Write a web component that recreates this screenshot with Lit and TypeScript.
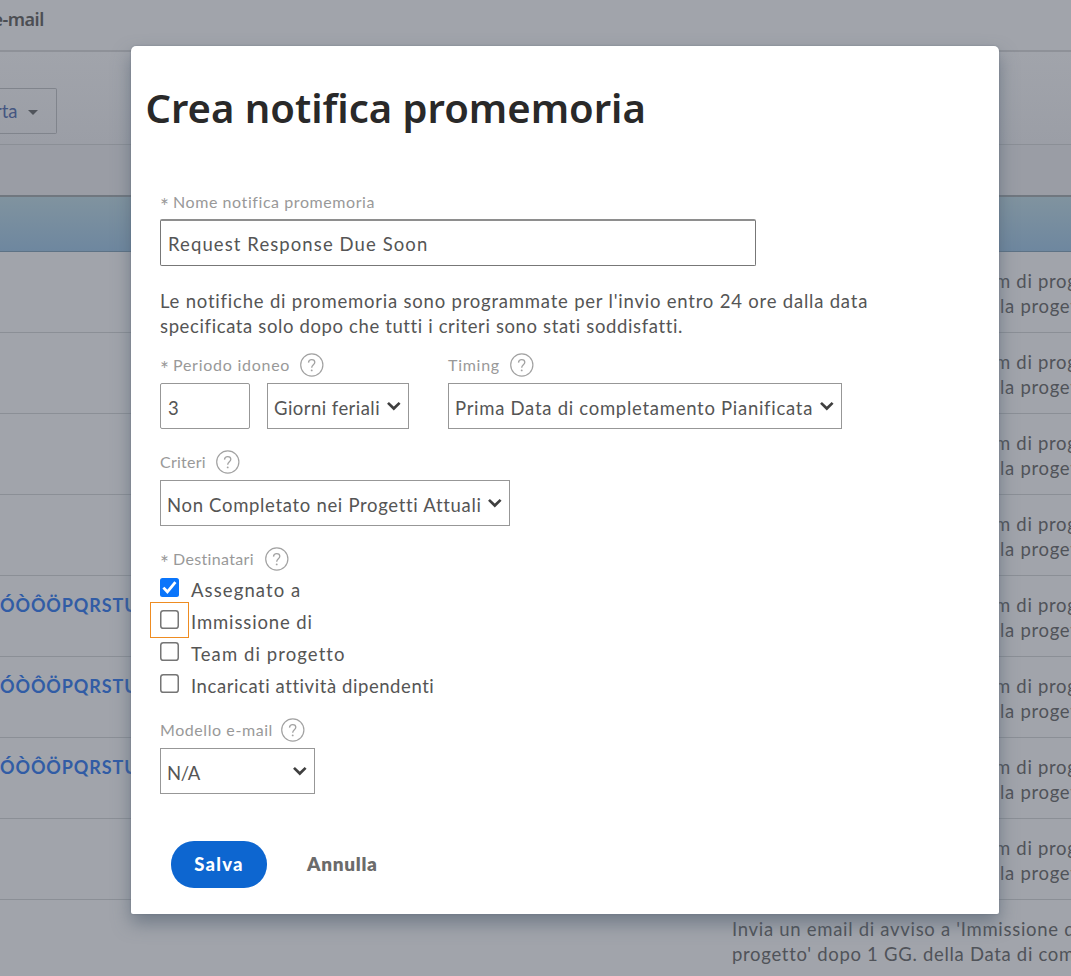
import { LitElement, html, css, svg, nothing } from "lit";
import { customElement, property } from "lit/decorators.js";

@customElement("help-icon")
export class HelpIcon extends LitElement {
  static styles = css`
    :host { display: block; width: 24px; height: 24px; flex: none; }
    svg { display: block; }
  `;
  render() {
    return html`<svg width="24" height="24" viewBox="0 0 24 24" fill="none" stroke="#a2a2a2">
      <circle cx="11.8" cy="12" r="11.1" stroke-width="1.2" />
      <path d="M8.5 9.6c.1-1.9 1.4-3 3.2-3s3.1 1.1 3.1 2.7c0 2.4-3.1 2.5-3.1 5.4" stroke-width="1.3" />
      <circle cx="11.7" cy="17.4" r=".95" fill="#a2a2a2" stroke="none" />
    </svg>`;
  }
}

@customElement("select-box")
export class SelectBox extends LitElement {
  @property() value = "";
  static styles = css`
    :host { display: flex; align-items: center; justify-content: space-between; box-sizing: border-box;
      height: 46px; border: 1px solid #979797; padding: 4px 6px 0 6px; background: #fff; white-space: nowrap; }
    svg { display: block; flex: none; margin-top: -5px; }
  `;
  render() {
    return html`<span>${this.value}</span>
      <svg width="16" height="12" viewBox="0 0 16 12" fill="none" stroke="#3f3f3f" stroke-width="2.7">
        <path d="M2 2.9 7.8 8.5l5.8-5.6" />
      </svg>`;
  }
}

@customElement("check-box")
export class CheckBox extends LitElement {
  @property({ type: Boolean }) checked = false;
  static styles = css`
    :host { display: block; width: 19px; height: 19px; flex: none; }
    svg { display: block; }
  `;
  render() {
    return html`<svg width="19" height="19" viewBox="0 0 19 19" fill="none">
      ${this.checked
        ? svg`<rect width="19" height="19" rx="2.5" fill="#0a75fb"/><path d="m3.4 9.6 4 4.2L15.4 4.2" stroke="#fff" stroke-width="2.8"/>`
        : svg`<rect x=".75" y=".75" width="17.5" height="17.5" rx="2.6" stroke="#757575" stroke-width="1.5" fill="#fff"/>`}
    </svg>`;
  }
}

@customElement("app-root")
export class AppRoot extends LitElement {
  static styles = css`
    :host { display: block; position: relative; width: 1071px; height: 976px; overflow: hidden;
      background: #a1a4ab; color: #555; font: 18.5px/24.5px Lato, "Open Sans", sans-serif; white-space: nowrap; }
    * { box-sizing: border-box; }
    .page { display: flex; flex-direction: column; height: 976px; }
    .crumb { height: 52px; flex: none; border-bottom: 2px solid #8e9198; padding-top: 7px;
      font: 600 18px/24px "Noto Sans", sans-serif; letter-spacing: -.5px; color: #4c4e53; overflow: hidden; }
    .crumb span { display: block; margin-left: -7.5px; }
    .tools { height: 93px; flex: none; border-bottom: 1px solid #8b8f96; padding-top: 36px;
      background: linear-gradient(#a1a4ab, #9b9ea6); }
    .more { display: flex; align-items: center; width: 57px; height: 46px; border: 1px solid #80848c; border-left: 0;
      border-radius: 0 2px 2px 0; color: #455681; gap: 10px; }
    .more span { margin-left: -5px; }
    .caret { border: 5px solid transparent; border-top-color: #50545b; border-bottom: 0; margin-top: 2px; }
    .filter { height: 50px; flex: none; background: #9a9da5; }
    .head { height: 57px; flex: none; border-top: 2px solid #70777f; border-bottom: 1px solid #5d7285;
      background: linear-gradient(#80939f, #6e879f); }
    .row { height: 81px; flex: none; display: flex; justify-content: space-between; border-bottom: 1px solid #8b8f96;
      padding-top: 17px; color: #505359; letter-spacing: .7px; }
    .row.last { border: 0; }
    .name { color: #315ca5; font-weight: 700; font-size: 18px; letter-spacing: .9px; line-height: 24px; width: 131px; overflow: hidden; }
    .desc { width: 76px; overflow: hidden; }
    .desc .a { margin-left: 0; }
    .desc .b { margin-left: 5px; }
    .desc.wide { width: 339px; }
    .dialog { position: absolute; left: 131px; top: 46px; width: 868px; height: 868px; background: #fff;
      border-radius: 5px 5px 2px 2px; box-shadow: 0 9px 18px rgba(80, 95, 112, .6), 0 0 2px rgba(70, 85, 105, .4);
      padding: 37px 0 0 29px; display: flex; flex-direction: column; align-items: flex-start; }
    h1 { margin: 0 0 0 -14.5px; font: 600 40px/50px "Noto Sans", sans-serif; color: #292929; }
    .label { display: flex; align-items: center; height: 24px; font-size: 16px; color: #999; }
    .label help-icon { margin-left: 10px; }
    .star { width: 13px; font-size: 21px; line-height: 24px; padding-top: 8px; letter-spacing: 0; }
    .first { margin-top: 57px; }
    .text { border: 1px solid #777; border-top: 2px solid #8e8e8e; border-radius: 2px; height: 47px; width: 596px;
      padding: 2px 7px 0; display: flex; align-items: center; margin-top: 5px; }
    .text.num { width: 90px; height: 46px; border: 1px solid #979797; padding-top: 4px; margin: 0 17px 0 0; }
    .note { margin-top: 23px; }
    .pair { display: flex; margin-top: 15px; }
    .period { width: 288px; }
    .line { display: flex; margin-top: 6px; }
    .g3 { width: 142px; letter-spacing: .45px; }
    .g4 { width: 394px; margin-top: 6px; letter-spacing: .72px; }
    .crit { margin-top: 21px; }
    .g5 { width: 350px; margin-top: 6px; letter-spacing: .68px; }
    .dest { margin-top: 21px; }
    .label.dest help-icon { margin-left: 11px; }
    .checks { margin-top: 7px; }
    .check { display: flex; gap: 12px; height: 32px; position: relative; }
    .check span { line-height: 25px; }
    .mark { position: absolute; left: -10px; top: -8px; width: 39px; height: 36px; border: 1px solid #ee8c22; }
    .model { margin-top: 12px; }
    .label.model help-icon { margin-left: 8px; }
    .g6 { width: 155px; margin-top: 6px; letter-spacing: -.3px; }
    .actions { display: flex; align-items: center; margin: 47px 0 0 11px; gap: 40px; }
    .save { background: #0d66d0; color: #fff; border-radius: 23px; width: 96px; height: 47px; line-height: 47px;
      text-align: center; font-weight: 900; letter-spacing: 1.2px; }
    .cancel { color: #6b6b6b; font-weight: 800; font-size: 19px; letter-spacing: .7px; }
    .s25 { letter-spacing: .25px; }
    .s35 { letter-spacing: .35px; }
    .s56 { letter-spacing: .57px; }
    .s62 { letter-spacing: .62px; }
    .s72 { letter-spacing: .74px; }
    .s79 { letter-spacing: .79px; }
    .s87 { letter-spacing: .87px; }
    .s108 { letter-spacing: 1.09px; }
  `;

  render() {
    const rows = [0, 1, 2, 3, 4, 5, 6, 7];
    return html`
      <div class="page">
        <div class="crumb"><span>e-mail</span></div>
        <div class="tools"><div class="more"><span>rta</span><i class="caret"></i></div></div>
        <div class="filter"></div>
        <div class="head"></div>
        ${rows.map((i) => html`<div class="row">
          <div class="name">${i >= 4 && i <= 6 ? "ÓÒÔÖPQRSTU" : nothing}</div>
          <div class="desc"><div class="a">m di progetto</div><div class="b">la progetto</div></div>
        </div>`)}
        <div class="row last"><div class="name"></div>
          <div class="desc wide"><div>Invia un email di avviso a 'Immissione di</div><div>progetto' dopo 1 GG. della Data di completamento</div></div>
        </div>
      </div>
      <div class="dialog">
        <h1>Crea notifica promemoria</h1>
        <div class="label first"><span class="star">*</span><span class="s56">Nome notifica promemoria</span></div>
        <div class="text s108">Request Response Due Soon</div>
        <div class="note"><div class="s79">Le notifiche di promemoria sono programmate per l'invio entro 24 ore dalla data</div>
          <div class="s62">specificata solo dopo che tutti i criteri sono stati soddisfatti.</div></div>
        <div class="pair">
          <div class="period"><div class="label"><span class="star">*</span><span class="s72">Periodo idoneo</span><help-icon></help-icon></div>
            <div class="line"><div class="text num">3</div><select-box class="g3" value="Giorni feriali"></select-box></div></div>
          <div><div class="label"><span class="s72">Timing</span><help-icon></help-icon></div>
            <select-box class="g4" value="Prima Data di completamento Pianificata"></select-box></div>
        </div>
        <div class="label crit"><span class="s25">Criteri</span><help-icon></help-icon></div>
        <select-box class="g5" value="Non Completato nei Progetti Attuali"></select-box>
        <div class="label dest"><span class="star">*</span><span class="s35">Destinatari</span><help-icon></help-icon></div>
        <div class="checks">
          <div class="check"><check-box checked></check-box><span class="s108">Assegnato a</span></div>
          <div class="check"><check-box></check-box><span class="s87">Immissione di</span><i class="mark"></i></div>
          <div class="check"><check-box></check-box><span class="s108">Team di progetto</span></div>
          <div class="check"><check-box></check-box><span class="s56">Incaricati attività dipendenti</span></div>
        </div>
        <div class="label model"><span class="s56">Modello e-mail</span><help-icon></help-icon></div>
        <select-box class="g6" value="N/A"></select-box>
        <div class="actions"><div class="save">Salva</div><div class="cancel">Annulla</div></div>
      </div>`;
  }
}
